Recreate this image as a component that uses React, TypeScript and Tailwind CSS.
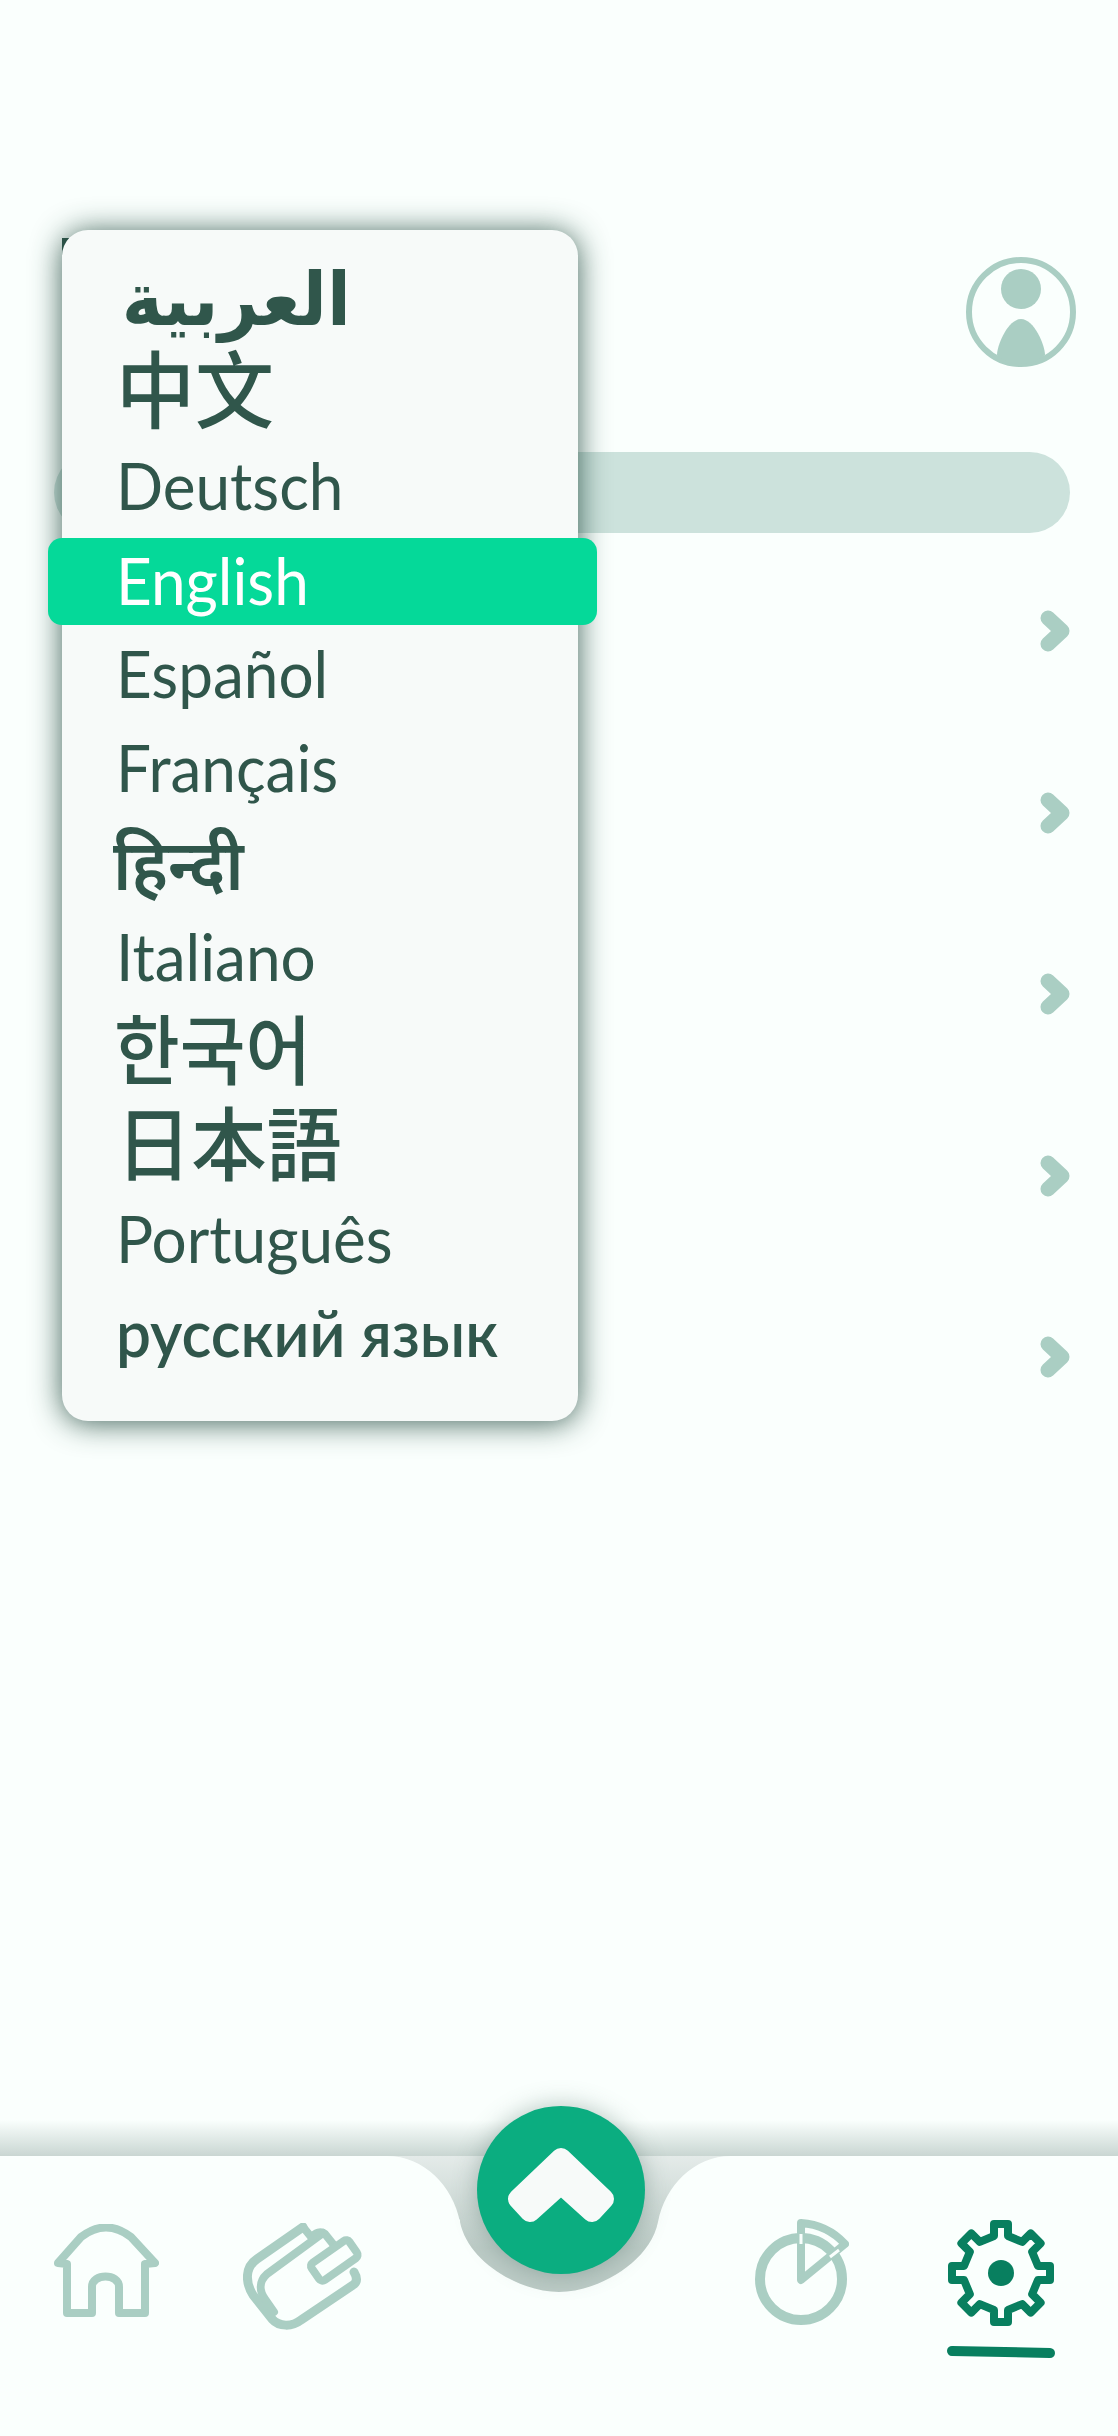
import React from 'react';

const languages = [
  { label: 'العربية', font: 'font-["DejaVu_Sans"] text-[74px] font-bold pl-[6px]' },
  { label: '中文', font: 'font-["Noto_Sans_CJK_SC"] text-[84px] font-medium mt-[-14px]' },
  { label: 'Deutsch', font: 'mt-[-4px]' },
  { label: 'English', active: true, font: 'mt-[-4px]' },
  { label: 'Español', font: 'mt-[-4px]' },
  { label: 'Français', font: 'mt-[-4px]' },
  { label: 'हिन्दी', font: 'font-["Noto_Sans",sans-serif] text-[70px] font-semibold ml-[-3px]' },
  { label: 'Italiano', font: 'mt-[-2px]' },
  { label: '한국어', font: 'font-["Noto_Sans_CJK_KR"] text-[76px] font-medium mt-[-10px] ml-[-2px]' },
  { label: '日本語', font: 'font-["Noto_Sans_CJK_JP"] text-[80px] font-medium mt-[-12px]' },
  { label: 'Português', font: 'mt-[-2px]' },
  { label: 'русский язык', font: 'font-semibold mt-[-2px]' },
];

const gearPath = () => {
  const points: string[] = [];
  for (let i = 0; i < 8; i++) {
    const a = (i * Math.PI) / 4 - Math.PI / 2;
    const at = (r: number, off: number) => {
      const x = 54 + r * Math.cos(a) - off * Math.sin(a);
      const y = 54 + r * Math.sin(a) + off * Math.cos(a);
      return `${x.toFixed(1)} ${y.toFixed(1)}`;
    };
    points.push(at(37, -7), at(49, -7), at(49, 7), at(37, 7));
  }
  return `M${points.join(' L')} Z`;
};

const Chevron = () => (
  <svg width="30" height="42" viewBox="0 0 30 42" fill="none" stroke="#aacec3" strokeWidth="15" strokeLinecap="round" strokeLinejoin="round">
    <path d="M8 8 L22 21 L8 34" />
  </svg>
);

const HomeIcon = () => (
  <svg width="105" height="94" viewBox="0 0 105 94" fill="none" stroke="#aacec3" strokeWidth="8" strokeLinejoin="round" strokeLinecap="round">
    <path d="M4 39 L27 13 Q52 -6 77 13 L101 39 L91 40 V89 H65 V63 C65 49 38 49 38 63 V89 H13 V40 Z" />
  </svg>
);

const WalletIcon = () => (
  <svg width="120" height="108" viewBox="0 0 120 108" fill="none" stroke="#aacec3" strokeWidth="8" strokeLinejoin="round" strokeLinecap="round">
    <path d="M60 4 L14 36 C2 44 2 59 10 72 L29 96 C36 104 49 104 58 97 L110 62 C115 59 114 54 111 49" strokeWidth="9" />
    <path d="M60 4 L69 15 M80 10 L24 51 C15 59 17 69 22 76 L31 89" strokeWidth="8" />
    <path d="M69 15 C72 9 78 8 82 11 L90 21" />
    <rect x="68" y="27" width="46" height="21" rx="4" transform="rotate(-35 91 37)" strokeWidth="8" />
  </svg>
);

const TimerIcon = () => (
  <svg width="94" height="108" viewBox="0 0 94 108" fill="none" stroke="#aacec3">
    <circle cx="46" cy="60" r="41" strokeWidth="10" />
    <path d="M46 61 V4 C62 5 78 12 90 25 Z" strokeWidth="8" strokeLinejoin="round" />
    <path d="M46 15 V25 M75 38 L84 31" stroke="#fafffd" strokeWidth="3" />
  </svg>
);

const GearIcon = () => (
  <svg width="108" height="108" viewBox="0 0 108 108" fill="none" stroke="#087f5f" strokeWidth="8" strokeLinejoin="round">
    <path d={gearPath()} />
    <circle cx="54" cy="54" r="13" fill="#087f5f" stroke="none" />
  </svg>
);

const BottomNav = () => (
  <div className="relative h-[316px] w-full">
    <svg className="absolute left-0 top-0" width="1118" height="316" viewBox="0 0 1118 316">
      <defs>
        <linearGradient id="fade" x1="0" y1="0" x2="0" y2="1">
          <stop offset="0" stopColor="#c9d6d2" />
          <stop offset="1" stopColor="#fafffd" />
        </linearGradient>
        <linearGradient id="notch" x1="0" y1="0" x2="0" y2="1">
          <stop offset="0" stopColor="#e4ebe9" />
          <stop offset="0.6" stopColor="#bccbc6" />
        </linearGradient>
      </defs>
      <rect x="0" y="0" width="1118" height="36" fill="url(#fade)" transform="matrix(1 0 0 -1 0 36)" />
      <path d="M385 36 H733 V100 L659 190 H460 V100 Z" fill="url(#notch)" />
      <path
        d="M0 36 H387 C424 36 453 66 460 102 C468 142 520 172 559 172 C598 172 650 142 658 102 C665 66 694 36 731 36 H1118 V316 H0 Z"
        fill="#fafffd"
      />
    </svg>
    <button className="absolute left-[477px] top-[-14px] flex h-[168px] w-[168px] items-center justify-center rounded-full bg-[#0bad80] shadow-[0_0_24px_rgba(90,120,110,0.45)]">
      <svg width="130" height="100" viewBox="0 0 130 100" fill="#f7faf9" stroke="#f7faf9" strokeWidth="20" strokeLinejoin="round">
        <path d="M65 18 L22 59 L34 72 L65 44 L96 72 L108 59 Z" />
      </svg>
    </button>
    <div className="relative flex items-start pl-[54px] pt-[103px]">
      <div className="mt-[1px]"><HomeIcon /></div>
      <div className="ml-[84px]"><WalletIcon /></div>
      <div className="ml-[392px] mt-[-4px]"><TimerIcon /></div>
      <div className="ml-[98px] mt-[-4px] flex flex-col items-center gap-[20px]">
        <GearIcon />
        <div className="h-[10px] w-[108px] rotate-[1.2deg] rounded-full bg-[#087f5f]" />
      </div>
    </div>
  </div>
);

const App = () => {
  return (
    <div className='relative flex h-[2436px] w-[1118px] flex-col overflow-hidden bg-[#fafffd] font-["Lato",sans-serif]'>
      <div className="flex-1 pl-[50px] pr-[48px]">
        <div className="flex items-start justify-between pt-[257px]">
          <div className="flex items-start">
            <div className="ml-[12px] mt-[-19px] h-[50px] w-[24px] bg-[#30564b]" />
            <h1 className="ml-[34px] mt-[-42px] text-[72px] font-bold text-[#30564b]">Settings</h1>
          </div>
          <svg width="110" height="110" viewBox="0 0 110 110" className="mr-[-6px]" fill="none">
            <circle cx="55" cy="55" r="52" stroke="#aacec3" strokeWidth="6" />
            <circle cx="55" cy="32" r="20" fill="#aacec3" />
            <path d="M31 98 C31 88 42 62 55 62 C68 62 79 88 79 98 C66 110 44 110 31 98 Z" fill="#aacec3" />
          </svg>
        </div>
        <div className="ml-[4px] mt-[85px] h-[81px] rounded-full bg-[#cce2dc]" />
        <div className="flex flex-col items-end pt-[77px]">
          {[0, 1, 2, 3, 4].map((i) => (
            <div key={i} className="flex h-[181.5px] items-start">
              <Chevron />
            </div>
          ))}
        </div>
      </div>

      <BottomNav />

      <div className="absolute left-[62px] top-[230px] w-[516px] rounded-[26px] bg-[#f7faf9] pb-[41px] pt-[22px] shadow-[0_2px_30px_rgba(30,70,60,0.85)]">
        {languages.map((lang) => (
          <div
            key={lang.label}
            className={
              lang.active
                ? 'relative z-10 ml-[-14px] mr-[-19px] mb-[3px] mt-[4px] flex h-[87px] items-center rounded-[14px] bg-[#05d999] pl-[68px] text-white'
                : 'flex h-[94px] items-center pl-[54px] text-[#30564b]'
            }
          >
            <span className={`origin-left scale-x-[0.94] whitespace-nowrap text-[66px] leading-none ${lang.font ?? ''}`}>{lang.label}</span>
          </div>
        ))}
      </div>
    </div>
  );
};

export default App;
